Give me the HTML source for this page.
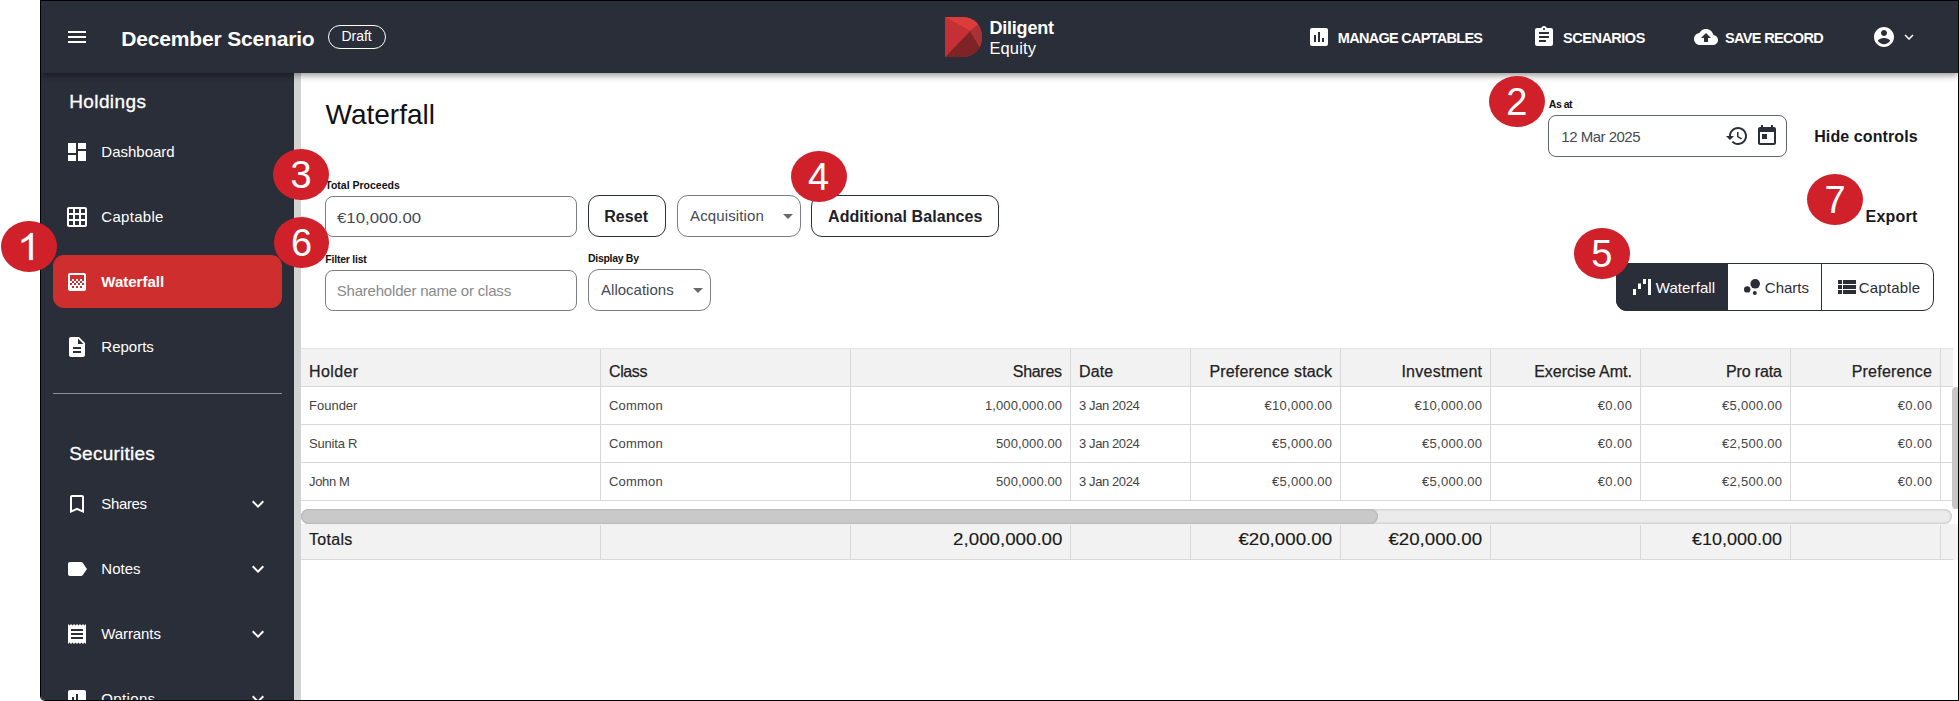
<!DOCTYPE html>
<html><head><meta charset="utf-8"><title>Waterfall</title>
<style>
html,body{margin:0;padding:0}
body{width:1959px;height:701px;position:relative;overflow:hidden;background:#fff;font-family:"Liberation Sans", sans-serif}
.t{position:absolute;white-space:nowrap;font-family:"Liberation Sans", sans-serif}
.i{position:absolute;display:block}
.box{position:absolute;box-sizing:border-box;border:1px solid #777;background:transparent}
.tri{position:absolute;width:0;height:0;border-left:5px solid transparent;border-right:5px solid transparent;border-top:5px solid #6a6a6a}
</style></head><body>
<div style="position:absolute;left:40px;top:0;width:1919px;height:701px;background:#000;border-bottom-left-radius:5px"></div>
<div style="position:absolute;left:41px;top:1px;width:1917px;height:699px;background:#fff;border-bottom-left-radius:4px;overflow:hidden" id="app">
<div style="position:absolute;left:-41px;top:-1px;width:1959px;height:701px">
<div style="position:absolute;left:41px;top:73px;width:253px;height:628px;background:#2a2e39"></div>
<div style="position:absolute;left:294px;top:73px;width:7px;height:628px;background:#d3d3d3"></div>
<div class="t" style="left:325.5px;top:97.60px;font-size:28px;line-height:34px;color:#111;font-weight:400;">Waterfall</div>
<div class="t" style="left:1548.8px;top:97.86px;font-size:10.5px;line-height:13px;color:#111;font-weight:700;letter-spacing:-0.5px;">As at</div>
<div class="box" style="left:1548px;top:115px;width:239px;height:42px;border-color:#5f646d;border-radius:8px"></div>
<div class="t" style="left:1561.3px;top:127.80px;font-size:15px;line-height:18px;color:#454a55;font-weight:400;letter-spacing:-0.5px;">12 Mar 2025</div>
<svg class="i" style="left:1724.7px;top:124.1px" width="24" height="24" viewBox="0 0 24 24" fill="#2a2e39" ><path d="M13 3c-4.970 0-9 4.030-9 9H1l3.890 3.890.07.14L9 12H6c0-3.870 3.130-7 7-7s7 3.130 7 7-3.130 7-7 7c-1.930 0-3.680-.79-4.940-2.060l-1.420 1.420C8.270 19.990 10.510 21 13 21c4.970 0 9-4.030 9-9s-4.030-9-9-9zm-1 5v5l4.280 2.540.72-1.210-3.500-2.080V8H12z"/></svg>
<svg class="i" style="left:1754.8px;top:123.9px" width="24" height="24" viewBox="0 0 24 24" fill="#2a2e39" ><path d="M19 3h-1V1h-2v2H8V1H6v2H5c-1.110 0-1.990.9-1.990 2L3 19c0 1.1.89 2 2 2h14c1.1 0 2-.9 2-2V5c0-1.1-.9-2-2-2zm0 16H5V8h14v11zM7 10h5v5H7z"/></svg>
<div class="t" style="left:1814.2px;top:126.96px;font-size:16px;line-height:19px;color:#16181d;font-weight:700;letter-spacing:0.1px;">Hide controls</div>
<div class="t" style="left:1865.6px;top:206.76px;font-size:16px;line-height:19px;color:#16181d;font-weight:700;letter-spacing:0.2px;">Export</div>
<div class="t" style="left:325.3px;top:178.66px;font-size:10.5px;line-height:13px;color:#111;font-weight:700;">Total Proceeds</div>
<div class="box" style="left:325px;top:196px;width:252px;height:41px;border-color:#7a7d84;border-radius:8px"></div>
<div class="t" style="left:337.3px;top:208.80px;font-size:15px;line-height:18px;color:#454a55;font-weight:400;transform:scaleX(1.12);transform-origin:left center;">€10,000.00</div>
<div class="box" style="left:588px;top:195px;width:78px;height:42px;border-color:#2a2e39;border-radius:11px"></div>
<div class="t" style="left:604.2px;top:206.76px;font-size:16px;line-height:19px;color:#1d2129;font-weight:700;letter-spacing:0.1px;">Reset</div>
<div class="box" style="left:677px;top:195px;width:124px;height:42px;border-color:#7a7d84;border-radius:11px"></div>
<div class="t" style="left:690px;top:206.60px;font-size:15px;line-height:18px;color:#454a55;font-weight:400;letter-spacing:0.13px;">Acquisition</div>
<div class="tri" style="left:783px;top:214px"></div>
<div class="box" style="left:811px;top:195px;width:188px;height:42px;border-color:#2a2e39;border-radius:11px"></div>
<div class="t" style="left:828px;top:206.76px;font-size:16px;line-height:19px;color:#1d2129;font-weight:700;letter-spacing:0.08px;">Additional Balances</div>
<div class="t" style="left:325.3px;top:252.56px;font-size:10.5px;line-height:13px;color:#111;font-weight:700;letter-spacing:-0.22px;">Filter list</div>
<div class="box" style="left:325px;top:270px;width:252px;height:41px;border-color:#7a7d84;border-radius:8px"></div>
<div class="t" style="left:336.7px;top:281.60px;font-size:15px;line-height:18px;color:#8a8a8a;font-weight:400;letter-spacing:-0.2px;">Shareholder name or class</div>
<div class="t" style="left:588px;top:251.66px;font-size:10.5px;line-height:13px;color:#111;font-weight:700;letter-spacing:-0.3px;">Display By</div>
<div class="box" style="left:588px;top:269px;width:123px;height:42px;border-color:#7a7d84;border-radius:11px"></div>
<div class="t" style="left:601.1px;top:280.60px;font-size:15px;line-height:18px;color:#454a55;font-weight:400;">Allocations</div>
<div class="tri" style="left:693px;top:288px"></div>
<div style="position:absolute;left:1616px;top:263px;width:318px;height:48px;box-sizing:border-box;border:1px solid #2a2e39;border-radius:11px;background:#fff"></div>
<div style="position:absolute;left:1616px;top:263px;width:112px;height:48px;background:#2a2e39;border-radius:11px 0 0 11px"></div>
<div style="position:absolute;left:1821px;top:263px;width:1px;height:48px;background:#2a2e39"></div>
<svg class="i" style="left:1629.7px;top:275px" width="24" height="24" viewBox="0 0 24 24" fill="#fff" ><path d="M18 4h3v16h-3zM3 14h3v6H3zM8 8.5h3V14H8zM13 4h3v5h-3z"/></svg>
<div class="t" style="left:1655.7px;top:278.60px;font-size:15px;line-height:18px;color:#fff;font-weight:400;letter-spacing:0.1px;">Waterfall</div>
<svg class="i" style="left:1740px;top:274.8px" width="24" height="24" viewBox="0 0 24 24" fill="#2a2e39" ><circle cx="7.2" cy="14.4" r="3.2"/><circle cx="14.8" cy="18" r="2"/><circle cx="15.2" cy="8.8" r="4.8"/></svg>
<div class="t" style="left:1764.8px;top:278.60px;font-size:15px;line-height:18px;color:#2a2e39;font-weight:400;">Charts</div>
<svg class="i" style="left:1835.2px;top:275px" width="24" height="24" viewBox="0 0 24 24" fill="#2a2e39" ><path d="M3 14h4v-4H3v4zm0 5h4v-4H3v4zM3 9h4V5H3v4zm5 5h13v-4H8v4zm0 5h13v-4H8v4zM8 5v4h13V5H8z"/></svg>
<div class="t" style="left:1858.7px;top:278.60px;font-size:15px;line-height:18px;color:#2a2e39;font-weight:400;letter-spacing:0.2px;">Captable</div>
<div style="position:absolute;left:301px;top:348px;width:1652px;height:38px;background:#f2f2f2;border-top:1px solid #e2e2e2;box-sizing:border-box"></div>
<div style="position:absolute;left:301px;top:524px;width:1657px;height:36px;background:#f2f2f2"></div>
<div style="position:absolute;left:301px;top:559px;width:1652px;height:1px;background:#d8d8d8"></div>
<div style="position:absolute;left:301px;top:386px;width:1652px;height:1px;background:#d8d8d8"></div>
<div style="position:absolute;left:301px;top:424px;width:1652px;height:1px;background:#d8d8d8"></div>
<div style="position:absolute;left:301px;top:462px;width:1652px;height:1px;background:#d8d8d8"></div>
<div style="position:absolute;left:301px;top:500px;width:1652px;height:1px;background:#d8d8d8"></div>
<div style="position:absolute;left:600px;top:349px;width:1px;height:152px;background:#d8d8d8"></div>
<div style="position:absolute;left:600px;top:525px;width:1px;height:34px;background:#d8d8d8"></div>
<div style="position:absolute;left:850px;top:349px;width:1px;height:152px;background:#d8d8d8"></div>
<div style="position:absolute;left:850px;top:525px;width:1px;height:34px;background:#d8d8d8"></div>
<div style="position:absolute;left:1070px;top:349px;width:1px;height:152px;background:#d8d8d8"></div>
<div style="position:absolute;left:1070px;top:525px;width:1px;height:34px;background:#d8d8d8"></div>
<div style="position:absolute;left:1190px;top:349px;width:1px;height:152px;background:#d8d8d8"></div>
<div style="position:absolute;left:1190px;top:525px;width:1px;height:34px;background:#d8d8d8"></div>
<div style="position:absolute;left:1340px;top:349px;width:1px;height:152px;background:#d8d8d8"></div>
<div style="position:absolute;left:1340px;top:525px;width:1px;height:34px;background:#d8d8d8"></div>
<div style="position:absolute;left:1490px;top:349px;width:1px;height:152px;background:#d8d8d8"></div>
<div style="position:absolute;left:1490px;top:525px;width:1px;height:34px;background:#d8d8d8"></div>
<div style="position:absolute;left:1640px;top:349px;width:1px;height:152px;background:#d8d8d8"></div>
<div style="position:absolute;left:1640px;top:525px;width:1px;height:34px;background:#d8d8d8"></div>
<div style="position:absolute;left:1790px;top:349px;width:1px;height:152px;background:#d8d8d8"></div>
<div style="position:absolute;left:1790px;top:525px;width:1px;height:34px;background:#d8d8d8"></div>
<div style="position:absolute;left:1940px;top:349px;width:1px;height:152px;background:#d8d8d8"></div>
<div style="position:absolute;left:1940px;top:525px;width:1px;height:34px;background:#d8d8d8"></div>
<div class="t" style="left:309px;top:362.26px;font-size:16px;line-height:19px;color:#222;font-weight:400;letter-spacing:0.4px;-webkit-text-stroke:0.25px #222;">Holder</div>
<div class="t" style="left:609px;top:362.26px;font-size:16px;line-height:19px;color:#222;font-weight:400;letter-spacing:-0.4px;-webkit-text-stroke:0.25px #222;">Class</div>
<div class="t" style="right:897.3px;text-align:right;top:362.26px;font-size:16px;line-height:19px;color:#222;font-weight:400;letter-spacing:-0.3px;-webkit-text-stroke:0.25px #222;">Shares</div>
<div class="t" style="left:1079px;top:362.26px;font-size:16px;line-height:19px;color:#222;font-weight:400;letter-spacing:0.1px;-webkit-text-stroke:0.25px #222;">Date</div>
<div class="t" style="right:626.83px;text-align:right;top:362.26px;font-size:16px;line-height:19px;color:#222;font-weight:400;letter-spacing:0.17px;-webkit-text-stroke:0.25px #222;">Preference stack</div>
<div class="t" style="right:476.74px;text-align:right;top:362.26px;font-size:16px;line-height:19px;color:#222;font-weight:400;letter-spacing:0.26px;-webkit-text-stroke:0.25px #222;">Investment</div>
<div class="t" style="right:327px;text-align:right;top:362.26px;font-size:16px;line-height:19px;color:#222;font-weight:400;-webkit-text-stroke:0.25px #222;">Exercise Amt.</div>
<div class="t" style="right:177.12px;text-align:right;top:362.26px;font-size:16px;line-height:19px;color:#222;font-weight:400;letter-spacing:-0.12px;-webkit-text-stroke:0.25px #222;">Pro rata</div>
<div class="t" style="right:26.77px;text-align:right;top:362.26px;font-size:16px;line-height:19px;color:#222;font-weight:400;letter-spacing:0.23px;-webkit-text-stroke:0.25px #222;">Preference</div>
<div class="t" style="left:309px;top:397.60px;font-size:13px;line-height:16px;color:#444;font-weight:400;">Founder</div>
<div class="t" style="left:609px;top:397.60px;font-size:13px;line-height:16px;color:#444;font-weight:400;letter-spacing:0.2px;">Common</div>
<div class="t" style="right:896.9px;text-align:right;top:397.60px;font-size:13px;line-height:16px;color:#444;font-weight:400;letter-spacing:0.1px;">1,000,000.00</div>
<div class="t" style="left:1079px;top:397.60px;font-size:13px;line-height:16px;color:#444;font-weight:400;letter-spacing:-0.4px;">3 Jan 2024</div>
<div class="t" style="right:626.73px;text-align:right;top:397.60px;font-size:13px;line-height:16px;color:#444;font-weight:400;letter-spacing:0.27px;">€10,000.00</div>
<div class="t" style="right:476.73px;text-align:right;top:397.60px;font-size:13px;line-height:16px;color:#444;font-weight:400;letter-spacing:0.27px;">€10,000.00</div>
<div class="t" style="right:326.55px;text-align:right;top:397.60px;font-size:13px;line-height:16px;color:#444;font-weight:400;letter-spacing:0.45px;">€0.00</div>
<div class="t" style="right:176.73px;text-align:right;top:397.60px;font-size:13px;line-height:16px;color:#444;font-weight:400;letter-spacing:0.27px;">€5,000.00</div>
<div class="t" style="right:26.55px;text-align:right;top:397.60px;font-size:13px;line-height:16px;color:#444;font-weight:400;letter-spacing:0.45px;">€0.00</div>
<div class="t" style="left:309px;top:435.60px;font-size:13px;line-height:16px;color:#444;font-weight:400;letter-spacing:-0.2px;">Sunita R</div>
<div class="t" style="left:609px;top:435.60px;font-size:13px;line-height:16px;color:#444;font-weight:400;letter-spacing:0.2px;">Common</div>
<div class="t" style="right:896.9px;text-align:right;top:435.60px;font-size:13px;line-height:16px;color:#444;font-weight:400;letter-spacing:0.1px;">500,000.00</div>
<div class="t" style="left:1079px;top:435.60px;font-size:13px;line-height:16px;color:#444;font-weight:400;letter-spacing:-0.4px;">3 Jan 2024</div>
<div class="t" style="right:626.73px;text-align:right;top:435.60px;font-size:13px;line-height:16px;color:#444;font-weight:400;letter-spacing:0.27px;">€5,000.00</div>
<div class="t" style="right:476.73px;text-align:right;top:435.60px;font-size:13px;line-height:16px;color:#444;font-weight:400;letter-spacing:0.27px;">€5,000.00</div>
<div class="t" style="right:326.55px;text-align:right;top:435.60px;font-size:13px;line-height:16px;color:#444;font-weight:400;letter-spacing:0.45px;">€0.00</div>
<div class="t" style="right:176.73px;text-align:right;top:435.60px;font-size:13px;line-height:16px;color:#444;font-weight:400;letter-spacing:0.27px;">€2,500.00</div>
<div class="t" style="right:26.55px;text-align:right;top:435.60px;font-size:13px;line-height:16px;color:#444;font-weight:400;letter-spacing:0.45px;">€0.00</div>
<div class="t" style="left:309px;top:473.60px;font-size:13px;line-height:16px;color:#444;font-weight:400;letter-spacing:-0.35px;">John M</div>
<div class="t" style="left:609px;top:473.60px;font-size:13px;line-height:16px;color:#444;font-weight:400;letter-spacing:0.2px;">Common</div>
<div class="t" style="right:896.9px;text-align:right;top:473.60px;font-size:13px;line-height:16px;color:#444;font-weight:400;letter-spacing:0.1px;">500,000.00</div>
<div class="t" style="left:1079px;top:473.60px;font-size:13px;line-height:16px;color:#444;font-weight:400;letter-spacing:-0.4px;">3 Jan 2024</div>
<div class="t" style="right:626.73px;text-align:right;top:473.60px;font-size:13px;line-height:16px;color:#444;font-weight:400;letter-spacing:0.27px;">€5,000.00</div>
<div class="t" style="right:476.73px;text-align:right;top:473.60px;font-size:13px;line-height:16px;color:#444;font-weight:400;letter-spacing:0.27px;">€5,000.00</div>
<div class="t" style="right:326.55px;text-align:right;top:473.60px;font-size:13px;line-height:16px;color:#444;font-weight:400;letter-spacing:0.45px;">€0.00</div>
<div class="t" style="right:176.73px;text-align:right;top:473.60px;font-size:13px;line-height:16px;color:#444;font-weight:400;letter-spacing:0.27px;">€2,500.00</div>
<div class="t" style="right:26.55px;text-align:right;top:473.60px;font-size:13px;line-height:16px;color:#444;font-weight:400;letter-spacing:0.45px;">€0.00</div>
<div class="t" style="left:309px;top:529.96px;font-size:16px;line-height:19px;color:#1a1a1a;font-weight:400;letter-spacing:0.3px;-webkit-text-stroke:0.2px #1a1a1a;">Totals</div>
<div class="t" style="right:897px;text-align:right;top:529.96px;font-size:16px;line-height:19px;color:#1a1a1a;font-weight:400;-webkit-text-stroke:0.12px #1a1a1a;transform:scaleX(1.17);transform-origin:right center;">2,000,000.00</div>
<div class="t" style="right:627px;text-align:right;top:529.96px;font-size:16px;line-height:19px;color:#1a1a1a;font-weight:400;-webkit-text-stroke:0.12px #1a1a1a;transform:scaleX(1.17);transform-origin:right center;">€20,000.00</div>
<div class="t" style="right:477px;text-align:right;top:529.96px;font-size:16px;line-height:19px;color:#1a1a1a;font-weight:400;-webkit-text-stroke:0.12px #1a1a1a;transform:scaleX(1.17);transform-origin:right center;">€20,000.00</div>
<div class="t" style="right:177px;text-align:right;top:529.96px;font-size:16px;line-height:19px;color:#1a1a1a;font-weight:400;-webkit-text-stroke:0.12px #1a1a1a;transform:scaleX(1.126);transform-origin:right center;">€10,000.00</div>
<div style="position:absolute;left:301px;top:509px;width:1651px;height:15px;border-radius:8px;background:#ebebeb;box-shadow:inset 0 0 3px rgba(0,0,0,.28)"></div>
<div style="position:absolute;left:301px;top:509px;width:1077px;height:15px;border-radius:8px;background:#c9c9c9;box-shadow:inset 0 0 2px rgba(0,0,0,.25)"></div>
<div style="position:absolute;left:1952px;top:387px;width:8px;height:122px;border-radius:4px 0 0 4px;background:#c8c8c8"></div>
<div style="position:absolute;left:41px;top:1px;width:1917px;height:72px;background:#2a2e39;box-shadow:0 2px 7px rgba(0,0,0,.45)"></div>
<svg class="i" style="left:65px;top:25px" width="24" height="24" viewBox="0 0 24 24" fill="#fff" ><path d="M3 18h18v-2H3v2zm0-5h18v-2H3v2zm0-7v2h18V6H3z"/></svg>
<div class="t" style="left:121.3px;top:25.92px;font-size:21px;line-height:25px;color:#fff;font-weight:700;letter-spacing:-0.17px;">December Scenario</div>
<div class="box" style="left:328px;top:25px;width:58px;height:24px;border-color:#fff;border-radius:12px"></div>
<div class="t" style="left:341.4px;top:28.45px;font-size:14px;line-height:17px;color:#fff;font-weight:400;">Draft</div>
<svg class="i" style="left:945px;top:17px" width="37" height="40" viewBox="0 0 37 40">
<defs><clipPath id="dc"><path d="M0 0H17C29 0 37 8 37 20S29 40 17 40H0Z"/></clipPath></defs>
<g clip-path="url(#dc)">
<rect width="37" height="40" fill="#c43034"/>
<path d="M0 0H37V6L25 14Z" fill="#dc3d3b"/>
<path d="M25 14L37 4V32Z" fill="#a83236"/>
<path d="M25 14L37 34V40H0Z" fill="#7f2426"/>
<path d="M0 0L25 14L0 40Z" fill="#c43034"/>
</g></svg>
<div class="t" style="left:989.4px;top:16.96px;font-size:18px;line-height:22px;color:#fff;font-weight:700;letter-spacing:-0.2px;">Diligent</div>
<div class="t" style="left:989.4px;top:37.68px;font-size:16.5px;line-height:20px;color:#fff;font-weight:400;letter-spacing:0.15px;">Equity</div>
<svg class="i" style="left:1307px;top:25px" width="24" height="24" viewBox="0 0 24 24" fill="#fff" ><path d="M19 3H5c-1.1 0-2 .9-2 2v14c0 1.1.9 2 2 2h14c1.1 0 2-.9 2-2V5c0-1.1-.9-2-2-2zM9 17H7v-7h2v7zm4 0h-2V7h2v10zm4 0h-2v-4h2v4z"/></svg>
<div class="t" style="left:1337.8px;top:29.58px;font-size:14.5px;line-height:17px;color:#fff;font-weight:700;letter-spacing:-0.72px;">MANAGE CAPTABLES</div>
<svg class="i" style="left:1532px;top:25px" width="24" height="24" viewBox="0 0 24 24" fill="#fff" ><path d="M19 3h-4.18C14.4 1.84 13.3 1 12 1c-1.3 0-2.4.84-2.820 2H5c-1.1 0-2 .9-2 2v14c0 1.1.9 2 2 2h14c1.1 0 2-.9 2-2V5c0-1.1-.9-2-2-2zm-7 0c.55 0 1 .45 1 1s-.45 1-1 1-1-.45-1-1 .45-1 1-1zm2 14H7v-2h7v2zm3-4H7v-2h10v2zm0-4H7V7h10v2z"/></svg>
<div class="t" style="left:1563.1px;top:29.58px;font-size:14.5px;line-height:17px;color:#fff;font-weight:700;letter-spacing:-0.5px;">SCENARIOS</div>
<svg class="i" style="left:1694px;top:25px" width="24" height="24" viewBox="0 0 24 24" fill="#fff" ><path d="M19.35 10.04C18.67 6.59 15.64 4 12 4 9.11 4 6.6 5.64 5.35 8.04 2.34 8.36 0 10.91 0 14c0 3.31 2.69 6 6 6h13c2.76 0 5-2.24 5-5 0-2.640-2.050-4.780-4.650-4.960zM14 13v4h-4v-4H7l5-5 5 5h-3z"/></svg>
<div class="t" style="left:1725px;top:29.58px;font-size:14.5px;line-height:17px;color:#fff;font-weight:700;letter-spacing:-0.65px;">SAVE RECORD</div>
<svg class="i" style="left:1872px;top:25px" width="24" height="24" viewBox="0 0 24 24" fill="#fff" ><path d="M12 2C6.48 2 2 6.48 2 12s4.48 10 10 10 10-4.48 10-10S17.52 2 12 2zm0 3c1.66 0 3 1.34 3 3s-1.34 3-3 3-3-1.34-3-3 1.34-3 3-3zm0 14.2c-2.5 0-4.710-1.280-6-3.220.03-1.990 4-3.080 6-3.080 1.990 0 5.970 1.090 6 3.080-1.290 1.940-3.500 3.220-6 3.220z"/></svg>
<svg class="i" style="left:1900px;top:28.3px" width="18" height="18" viewBox="0 0 24 24" fill="#fff" ><path d="M16.59 8.59L12 13.17 7.41 8.590 6 10l6 6 6-6z"/></svg>
<div class="t" style="left:69.2px;top:89.72px;font-size:19px;line-height:23px;color:#fff;font-weight:400;letter-spacing:0.4px;-webkit-text-stroke:0.3px #fff;">Holdings</div>
<svg class="i" style="left:65px;top:140px" width="24" height="24" viewBox="0 0 24 24" fill="#fff" ><path d="M3 13h8V3H3v10zm0 8h8v-6H3v6zm10 0h8V11h-8v10zm0-18v6h8V3h-8z"/></svg>
<div class="t" style="left:101.3px;top:142.80px;font-size:15px;line-height:18px;color:#fff;font-weight:400;">Dashboard</div>
<svg class="i" style="left:65px;top:205px" width="24" height="24" viewBox="0 0 24 24" fill="#fff" ><path d="M20 2H4c-1.1 0-2 .9-2 2v16c0 1.1.9 2 2 2h16c1.1 0 2-.9 2-2V4c0-1.1-.9-2-2-2zM8 20H4v-4h4v4zm0-6H4v-4h4v4zm0-6H4V4h4v4zm6 12h-4v-4h4v4zm0-6h-4v-4h4v4zm0-6h-4V4h4v4zm6 12h-4v-4h4v4zm0-6h-4v-4h4v4zm0-6h-4V4h4v4z"/></svg>
<div class="t" style="left:101.3px;top:207.80px;font-size:15px;line-height:18px;color:#fff;font-weight:400;letter-spacing:0.3px;">Captable</div>
<div style="position:absolute;left:53px;top:255px;width:229px;height:53px;border-radius:11px;background:#cf2e2e"></div>
<svg class="i" style="left:65px;top:270px" width="24" height="24" viewBox="0 0 24 24" fill="#fff" ><path d="M11 9h2v2h-2zm-2 2h2v2H9zm4 0h2v2h-2zm2-2h2v2h-2zM7 9h2v2H7zm12-6H5c-1.1 0-2 .9-2 2v14c0 1.1.9 2 2 2h14c1.1 0 2-.9 2-2V5c0-1.1-.9-2-2-2zM9 18H7v-2h2v2zm4 0h-2v-2h2v2zm4 0h-2v-2h2v2zm2-7h-2v2h2v2h-2v-2h-2v2h-2v-2h-2v2H9v-2H7v2H5v-2h2v-2H5V5h14v6z"/></svg>
<div class="t" style="left:101.3px;top:272.80px;font-size:15px;line-height:18px;color:#fff;font-weight:700;">Waterfall</div>
<svg class="i" style="left:65px;top:335px" width="24" height="24" viewBox="0 0 24 24" fill="#fff" ><path d="M14 2H6c-1.1 0-1.99.9-1.99 2L4 20c0 1.1.89 2 1.99 2H18c1.1 0 2-.9 2-2V8l-6-6zm2 16H8v-2h8v2zm0-4H8v-2h8v2zm-3-5V3.5L18.5 9H13z"/></svg>
<div class="t" style="left:101.3px;top:337.80px;font-size:15px;line-height:18px;color:#fff;font-weight:400;">Reports</div>
<div style="position:absolute;left:53px;top:393px;width:229px;height:1px;background:#8e9197"></div>
<div class="t" style="left:69.2px;top:441.72px;font-size:19px;line-height:23px;color:#fff;font-weight:400;letter-spacing:0.25px;-webkit-text-stroke:0.3px #fff;">Securities</div>
<svg class="i" style="left:65px;top:492px" width="24" height="24" viewBox="0 0 24 24" fill="#fff" ><path d="M17 3H7c-1.1 0-1.99.9-1.99 2L5 21l7-3 7 3V5c0-1.1-.9-2-2-2zm0 15l-5-2.18L7 18V5h10v13z"/></svg>
<div class="t" style="left:101.3px;top:494.80px;font-size:15px;line-height:18px;color:#fff;font-weight:400;letter-spacing:-0.35px;">Shares</div>
<svg class="i" style="left:246px;top:492px" width="24" height="24" viewBox="0 0 24 24" fill="#fff" ><path d="M16.59 8.59L12 13.17 7.41 8.590 6 10l6 6 6-6z"/></svg>
<svg class="i" style="left:65px;top:557px" width="24" height="24" viewBox="0 0 24 24" fill="#fff" ><path d="M17.63 5.84C17.27 5.33 16.67 5 16 5L5 5.01C3.9 5.01 3 5.9 3 7v10c0 1.1.9 1.99 2 1.99L16 19c.67 0 1.27-.33 1.63-.84L22 12l-4.37-6.16z"/></svg>
<div class="t" style="left:101.3px;top:559.80px;font-size:15px;line-height:18px;color:#fff;font-weight:400;">Notes</div>
<svg class="i" style="left:246px;top:557px" width="24" height="24" viewBox="0 0 24 24" fill="#fff" ><path d="M16.59 8.59L12 13.17 7.41 8.590 6 10l6 6 6-6z"/></svg>
<svg class="i" style="left:65px;top:622px" width="24" height="24" viewBox="0 0 24 24" fill="#fff" ><path d="M18 17H6v-2h12v2zm0-4H6v-2h12v2zm0-4H6V7h12v2zM3 22l1.5-1.5L6 22l1.5-1.5L9 22l1.5-1.5L12 22l1.5-1.5L15 22l1.5-1.5L18 22l1.5-1.5L21 22V2l-1.5 1.5L18 2l-1.5 1.5L15 2l-1.5 1.5L12 2l-1.5 1.5L9 2 7.500 3.5 6 2 4.500 3.500 3 2v20z"/></svg>
<div class="t" style="left:101.3px;top:624.80px;font-size:15px;line-height:18px;color:#fff;font-weight:400;letter-spacing:-0.1px;">Warrants</div>
<svg class="i" style="left:246px;top:622px" width="24" height="24" viewBox="0 0 24 24" fill="#fff" ><path d="M16.59 8.59L12 13.17 7.41 8.590 6 10l6 6 6-6z"/></svg>
<svg class="i" style="left:65px;top:687px" width="24" height="24" viewBox="0 0 24 24" fill="#fff" ><path d="M19 3H5c-1.1 0-2 .9-2 2v14c0 1.1.9 2 2 2h14c1.1 0 2-.9 2-2V5c0-1.1-.9-2-2-2zM9 17H7v-7h2v7zm4 0h-2V7h2v10zm4 0h-2v-4h2v4z"/></svg>
<div class="t" style="left:101.3px;top:689.80px;font-size:15px;line-height:18px;color:#fff;font-weight:400;letter-spacing:0.35px;">Options</div>
<svg class="i" style="left:246px;top:687px" width="24" height="24" viewBox="0 0 24 24" fill="#fff" ><path d="M16.59 8.59L12 13.17 7.41 8.590 6 10l6 6 6-6z"/></svg>
</div></div>
<div style="position:absolute;left:1.2px;top:221.0px;width:55.6px;height:50.8px;border-radius:50%;background:#d0202a"></div>
<svg class="i" style="left:0;top:200px" width="80" height="80" viewBox="0 0 80 80"><path transform="translate(17.0,59.9) scale(0.0207,-0.01835)" fill="#fff" stroke="#fff" stroke-width="14" d="M763 0H583V1147Q518 1085 412.5 1023T223 930V1104Q373 1174 485 1274T644 1466H763Z"/></svg>
<div style="position:absolute;left:1489.1px;top:76.0px;width:55.6px;height:50.8px;border-radius:50%;background:#d0202a"></div>
<div class="t" style="left:1486.9px;width:60px;text-align:center;top:78.83px;font-size:38px;line-height:46px;color:#fff">2</div>
<div style="position:absolute;left:273.3px;top:149.0px;width:55.6px;height:50.8px;border-radius:50%;background:#d0202a"></div>
<div class="t" style="left:271.1px;width:60px;text-align:center;top:151.83px;font-size:38px;line-height:46px;color:#fff">3</div>
<div style="position:absolute;left:791.3px;top:150.9px;width:55.6px;height:50.8px;border-radius:50%;background:#d0202a"></div>
<div class="t" style="left:788.6px;width:60px;text-align:center;top:153.73px;font-size:38px;line-height:46px;color:#fff">4</div>
<div style="position:absolute;left:1574.1px;top:228.0px;width:55.6px;height:50.8px;border-radius:50%;background:#d0202a"></div>
<div class="t" style="left:1571.9px;width:60px;text-align:center;top:230.83px;font-size:38px;line-height:46px;color:#fff">5</div>
<div style="position:absolute;left:273.9px;top:217.1px;width:55.6px;height:50.8px;border-radius:50%;background:#d0202a"></div>
<div class="t" style="left:271.7px;width:60px;text-align:center;top:219.93px;font-size:38px;line-height:46px;color:#fff">6</div>
<div style="position:absolute;left:1807.3px;top:173.9px;width:55.6px;height:50.8px;border-radius:50%;background:#d0202a"></div>
<div class="t" style="left:1805.1px;width:60px;text-align:center;top:176.73px;font-size:38px;line-height:46px;color:#fff">7</div>
</body></html>
